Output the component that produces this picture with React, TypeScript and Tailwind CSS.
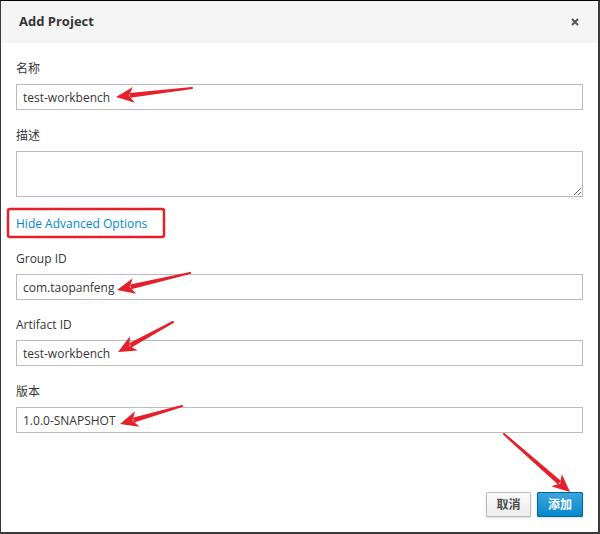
const font = { fontFamily: '"Open Sans", "Noto Sans CJK SC", sans-serif' }

const Field = ({ label, value, className = '' }: { label: string; value: string; className?: string }) => (
  <div className={className}>
    <label className="block text-[12px] leading-[18px] text-[#363636] mb-[6px]">{label}</label>
    <input
      readOnly
      value={value}
      className="block w-full h-[26px] border border-[#bbbbbb] bg-white px-[6px] text-[12px] text-[#363636] outline-none"
    />
  </div>
)

// red annotation arrow: tapered shaft from tail to tip plus filled head
const Arrow = ({ x1, y1, x2, y2 }: { x1: number; y1: number; x2: number; y2: number }) => {
  const a = Math.atan2(y2 - y1, x2 - x1)
  const cos = Math.cos(a)
  const sin = Math.sin(a)
  const len = 18
  const w = 8
  const bx = x2 - cos * len
  const by = y2 - sin * len
  const nx = -sin
  const ny = cos
  const tw = 1.1 // half width at tail
  const hw = 2.4 // half width near head
  const sx = bx + cos * 4
  const sy = by + sin * 4
  const shaft = `${x1 + nx * tw},${y1 + ny * tw} ${sx + nx * hw},${sy + ny * hw} ${sx - nx * hw},${sy - ny * hw} ${x1 - nx * tw},${y1 - ny * tw}`
  const head = `${x2},${y2} ${bx + nx * w},${by + ny * w} ${bx + cos * 5},${by + sin * 5} ${bx - nx * w},${by - ny * w}`
  return (
    <g fill="#e5202a">
      <polygon points={shaft} />
      <circle cx={x1} cy={y1} r={tw} />
      <polygon points={head} />
    </g>
  )
}

export default function App() {
  return (
    <div
      className="relative w-[600px] h-[534px] bg-white border-t border-t-black border-l border-l-[#3a3a3a] border-r-2 border-r-[#3a3a3a] border-b-2 border-b-[#3a3a3a] flex flex-col"
      style={font}
    >
      {/* Header */}
      <div className="h-[42px] bg-[#f5f5f5] flex items-center justify-between pl-[18px] pr-[19px] shrink-0">
        <h4 className="text-[13px] font-bold text-[#363636]">Add Project</h4>
        <svg width="8" height="8" viewBox="0 0 8 8">
          <path d="M1 1L7 7M7 1L1 7" stroke="#4d5258" strokeWidth="1.8" />
        </svg>
      </div>

      {/* Body */}
      <div className="flex-1 px-[15px] pt-[17px]">
        <Field label="名称" value="test-workbench" />

        <div className="mt-[17px]">
          <label className="block text-[12px] leading-[18px] text-[#363636] mb-[6px]">描述</label>
          <textarea className="block w-full h-[46px] border border-[#bbbbbb] bg-white px-[6px] text-[12px] outline-none" />
        </div>

        <div className="mt-[16px] leading-[18px]">
          <a className="text-[12px] text-[#0088ce]">Hide Advanced Options</a>
        </div>

        <Field label="Group ID" value="com.taopanfeng" className="mt-[17px]" />
        <Field label="Artifact ID" value="test-workbench" className="mt-[16px]" />
        <Field label="版本" value="1.0.0-SNAPSHOT" className="mt-[17px]" />
      </div>

      {/* Footer */}
      <div className="flex justify-end gap-[6px] px-[15px] pb-[15px]">
        <button className="h-[25px] w-[45px] border border-[#bbbbbb] bg-gradient-to-b from-[#fafafa] to-[#ededed] text-[12px] font-bold text-[#4d4d4d] rounded-[1px] shadow-[0_1px_2px_rgba(0,0,0,0.15)]">
          取消
        </button>
        <button className="h-[25px] w-[46px] border border-[#00659c] bg-gradient-to-b from-[#39a5dc] to-[#0088ce] text-[12px] font-bold text-white rounded-[1px] shadow-[0_1px_2px_rgba(0,0,0,0.15)]">
          添加
        </button>
      </div>

      {/* Annotations */}
      <svg className="absolute -top-px -left-px pointer-events-none" width="600" height="534">
        <rect x="8" y="209" width="156" height="28" rx="2" fill="none" stroke="#e5202a" strokeWidth="2.5" />
        <Arrow x1={192} y1={88} x2={116} y2={97} />
        <Arrow x1={190} y1={273} x2={117} y2={290} />
        <Arrow x1={173} y1={322} x2={118} y2={352} />
        <Arrow x1={182} y1={406} x2={120} y2={424} />
        <Arrow x1={504} y1={434} x2={570} y2={492} />
      </svg>
    </div>
  )
}
